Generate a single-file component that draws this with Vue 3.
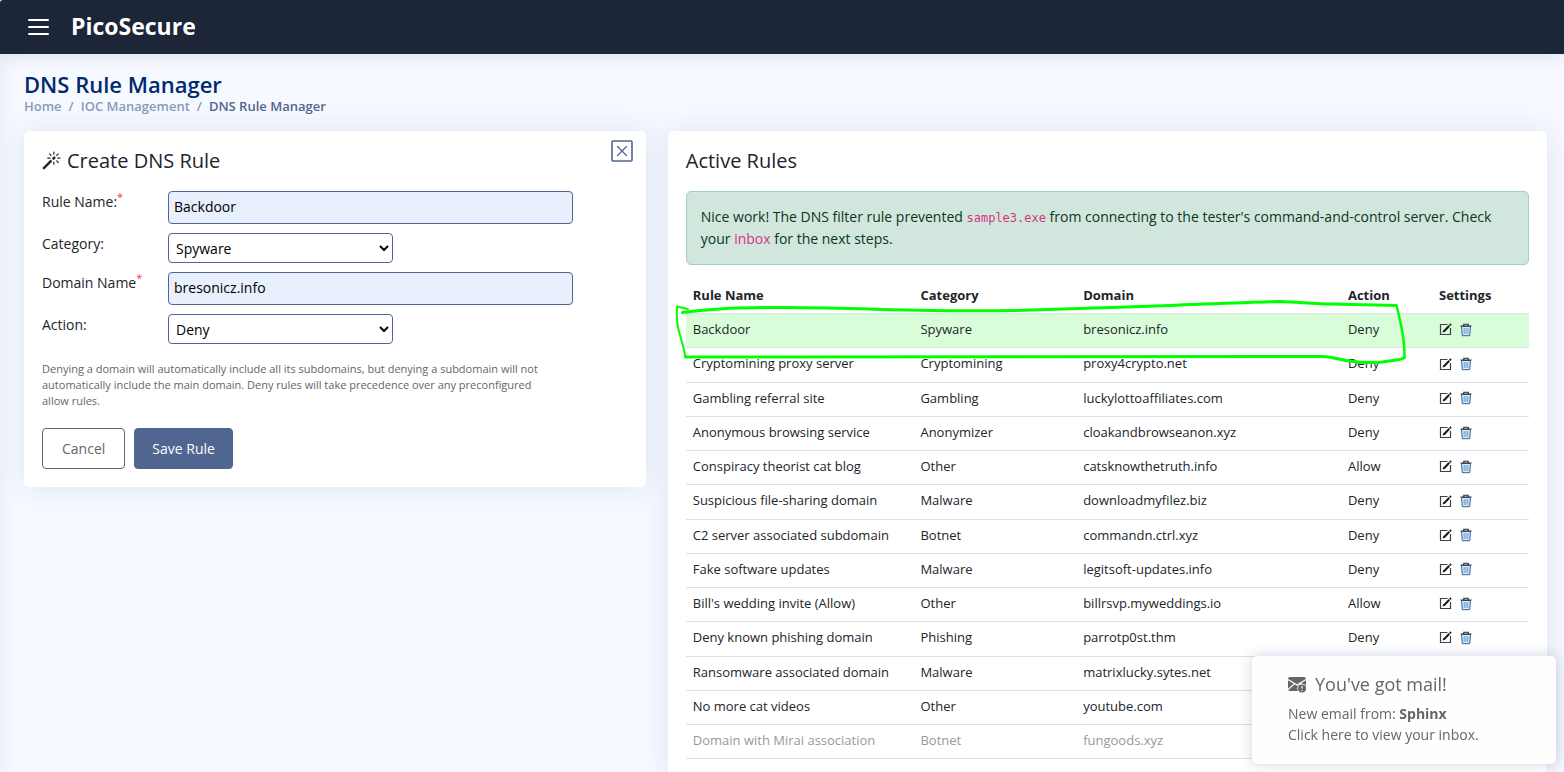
<script setup>
import { ref } from 'vue'

const ruleName = ref('Backdoor')
const category = ref('Spyware')
const domain = ref('bresonicz.info')
const action = ref('Deny')

const categories = ['Spyware', 'Malware', 'Botnet', 'Phishing', 'Cryptomining', 'Gambling', 'Anonymizer', 'Other']

const rules = [
  { name: 'Backdoor', category: 'Spyware', domain: 'bresonicz.info', action: 'Deny', state: 'added' },
  { name: 'Cryptomining proxy server', category: 'Cryptomining', domain: 'proxy4crypto.net', action: 'Deny' },
  { name: 'Gambling referral site', category: 'Gambling', domain: 'luckylottoaffiliates.com', action: 'Deny' },
  { name: 'Anonymous browsing service', category: 'Anonymizer', domain: 'cloakandbrowseanon.xyz', action: 'Deny' },
  { name: 'Conspiracy theorist cat blog', category: 'Other', domain: 'catsknowthetruth.info', action: 'Allow' },
  { name: 'Suspicious file-sharing domain', category: 'Malware', domain: 'downloadmyfilez.biz', action: 'Deny' },
  { name: 'C2 server associated subdomain', category: 'Botnet', domain: 'commandn.ctrl.xyz', action: 'Deny' },
  { name: 'Fake software updates', category: 'Malware', domain: 'legitsoft-updates.info', action: 'Deny' },
  { name: "Bill's wedding invite (Allow)", category: 'Other', domain: 'billrsvp.myweddings.io', action: 'Allow' },
  { name: 'Deny known phishing domain', category: 'Phishing', domain: 'parrotp0st.thm', action: 'Deny' },
  { name: 'Ransomware associated domain', category: 'Malware', domain: 'matrixlucky.sytes.net', action: 'Deny' },
  { name: 'No more cat videos', category: 'Other', domain: 'youtube.com', action: 'Deny' },
  { name: 'Domain with Mirai association', category: 'Botnet', domain: 'fungoods.xyz', action: 'Deny', state: 'muted' },
]
</script>

<template>
  <div class="app">
    <header class="topbar">
      <button class="menu" type="button" aria-label="Toggle menu">
        <svg viewBox="0 0 21 18" width="21" height="18" fill="none" stroke="#fff" stroke-width="2" stroke-linecap="round">
          <path d="M1 2h19M1 9h19M1 16h19" />
        </svg>
      </button>
      <a class="brand" href="#">PicoSecure</a>
    </header>

    <main class="main">
      <div class="page-title">
        <h1>DNS Rule Manager</h1>
        <nav class="crumbs" aria-label="Breadcrumb">
          <a href="#">Home</a><span>/</span><a href="#">IOC Management</a><span>/</span><strong>DNS Rule Manager</strong>
        </nav>
      </div>

      <div class="columns">
        <div class="col">
          <section class="card">
            <button class="close" type="button" aria-label="Close">
              <svg viewBox="0 0 22 22" width="22" height="22" fill="none" stroke="#50658f">
                <rect x="1" y="1" width="20" height="20" rx="1" stroke-width="1.6" />
                <path d="M6.5 6.5l9 9M15.5 6.5l-9 9" stroke-width="1.3" stroke-linecap="round" />
              </svg>
            </button>
            <h2>
              <svg class="wand" viewBox="0 0 16 16" width="19" height="19" fill="currentColor" aria-hidden="true">
                <path d="M9.5 2.672a.5.5 0 1 0 1 0V.843a.5.5 0 0 0-1 0v1.829Zm4.5.035A.5.5 0 0 0 13.293 2L12 3.293a.5.5 0 1 0 .707.707L14 2.707ZM7.293 4A.5.5 0 1 0 8 3.293L6.707 2A.5.5 0 0 0 6 2.707L7.293 4Zm-.621 2.5a.5.5 0 1 0 0-1H4.843a.5.5 0 1 0 0 1h1.829Zm8.485 0a.5.5 0 1 0 0-1h-1.829a.5.5 0 0 0 0 1h1.829ZM13.293 10A.5.5 0 1 0 14 9.293L12.707 8a.5.5 0 1 0-.707.707L13.293 10ZM9.5 11.157a.5.5 0 0 0 1 0V9.328a.5.5 0 0 0-1 0v1.829Zm1.854-5.097a.5.5 0 0 0 0-.706l-.708-.708a.5.5 0 0 0-.707 0L8.646 5.94a.5.5 0 0 0 0 .707l.708.708a.5.5 0 0 0 .707 0l1.293-1.293Zm-3 3a.5.5 0 0 0 0-.706l-.708-.708a.5.5 0 0 0-.707 0L.646 13.94a.5.5 0 0 0 0 .707l.707.707a.5.5 0 0 0 .707 0L8.354 9.06Z" />
              </svg>
              Create DNS Rule
            </h2>
            <form @submit.prevent>
              <div class="fields">
                <label for="rule-name">Rule Name:<sup>*</sup></label>
                <input id="rule-name" v-model="ruleName" type="text" />
                <label for="category">Category:</label>
                <select id="category" v-model="category">
                  <option v-for="c in categories" :key="c">{{ c }}</option>
                </select>
                <label for="domain">Domain Name<sup>*</sup></label>
                <input id="domain" v-model="domain" type="text" />
                <label for="action">Action:</label>
                <select id="action" v-model="action">
                  <option>Deny</option>
                  <option>Allow</option>
                </select>
              </div>
              <p class="help">
                Denying a domain will automatically include all its subdomains, but denying a subdomain will not
                automatically include the main domain. Deny rules will take precedence over any preconfigured allow
                rules.
              </p>
              <div class="actions">
                <button class="btn" type="button">Cancel</button>
                <button class="btn primary" type="submit">Save Rule</button>
              </div>
            </form>
          </section>
        </div>

        <div class="col">
          <section class="card">
            <h2>Active Rules</h2>
            <div class="alert" role="alert">
              Nice work! The DNS filter rule prevented <code>sample3.exe</code> from connecting to the tester's
              command-and-control server. Check your <a href="#">inbox</a> for the next steps.
            </div>
            <div class="table-wrap">
              <table>
                <thead>
                  <tr>
                    <th class="c-name">Rule Name</th>
                    <th class="c-cat">Category</th>
                    <th class="c-domain">Domain</th>
                    <th class="c-action">Action</th>
                    <th>Settings</th>
                  </tr>
                </thead>
                <tbody>
                  <tr v-for="rule in rules" :key="rule.name" :class="rule.state">
                    <td>{{ rule.name }}</td>
                    <td>{{ rule.category }}</td>
                    <td>{{ rule.domain }}</td>
                    <td>{{ rule.action }}</td>
                    <td>
                      <div class="tools">
                        <button type="button" aria-label="Edit rule">
                          <svg viewBox="0 0 13 13" width="13" height="13" fill="none">
                            <path d="M8.500 1.500H1.500v10h10V5" stroke="#3c4149" stroke-width="1.2" />
                            <path d="M3.600 9.600l.8-2.600 1.800 1.800z" fill="#16191d" />
                            <path d="M5 8.200L10.300 2.800" stroke="#16191d" stroke-width="2" />
                            <path d="M10.800 2.200l1.200-1.200" stroke="#16191d" stroke-width="2" />
                          </svg>
                        </button>
                        <button type="button" aria-label="Delete rule">
                          <svg viewBox="0 0 12 14" width="12" height="14" fill="none">
                            <path d="M1.500 3.500h9l-.8 9.200H2.300z" fill="#d6ecfd" stroke="#3d5f80" />
                            <path d="M.5 3h11M3.800 3V1.200h4.400V3" stroke="#26303a" stroke-width="1.1" />
                            <path d="M4.200 5v6M6 5v6M7.800 5v6" stroke="#3c8fd4" stroke-width=".8" />
                          </svg>
                        </button>
                      </div>
                    </td>
                  </tr>
                </tbody>
              </table>
              <svg class="marker" viewBox="0 0 740 70" width="740" height="70" fill="none" stroke="#00ff00" stroke-linecap="round" stroke-linejoin="round" aria-hidden="true">
                <path d="M14 10L3 7.500C2 20 3 27 6 36C9 46 10 50 11.500 58" stroke-width="2" />
                <path d="M8.500 13.500C40 9 75 8 113 8.500C190 9 260 13 340 11.500C400 10 445 8 496 6.500C535 5 575 3 606 2.500C625 3 640 5 660 5C685 6 705 6 722 6.500" stroke-width="3" />
                <path d="M722.500 6.500C727 24 731 42 730.500 58" stroke-width="2.500" />
                <path d="M730.500 58.500C728 61 723 61 715 62C705 64 690 64 675 62C667 61 660 58 648 57.500L11.500 58" stroke-width="3" />
              </svg>
            </div>
          </section>
        </div>
      </div>
    </main>

    <a class="toast" href="#">
      <span class="toast-title">
        <svg viewBox="0 0 20 17" width="20" height="17" aria-hidden="true">
          <rect x="0" y="1" width="18" height="14" rx="2" fill="#666" />
          <path d="M0 3.600L9 9l9-5.400M0 13.500l6.700-5.900M18 11l-6-4" fill="none" stroke="#fff" stroke-width="1.200" />
          <circle cx="14" cy="12.500" r="4.800" fill="#fff" />
          <circle cx="14" cy="12.500" r="4" fill="#666" />
          <path d="M14 10v2.800M14 14v1" stroke="#fff" stroke-width="1.200" />
        </svg>
        You've got mail!
      </span>
      <span>New email from: <strong>Sphinx</strong></span>
      <span>Click here to view your inbox.</span>
    </a>
  </div>
</template>

<style>
body {
  margin: 0;
  background: #f6f9ff;
  overflow: hidden;
}
</style>

<style scoped>
.app {
  font-family: "Open Sans", "Noto Sans", sans-serif;
  font-size: 14px;
  line-height: 22px;
  color: #212529;
}
.app *,
.app *::before {
  box-sizing: border-box;
}
a {
  text-decoration: none;
}
button,
input,
select {
  font: inherit;
}

.topbar {
  display: flex;
  align-items: center;
  gap: 22px;
  height: 54px;
  padding: 0 28px;
  background: #1d2538;
  border-top-left-radius: 3px;
  box-shadow: 0 2px 20px rgba(1, 41, 112, 0.1);
}
.menu {
  display: flex;
  padding: 0;
  border: 0;
  background: none;
}
.brand {
  padding-bottom: 2px;
  color: #fff;
  font-size: 23px;
  font-weight: 700;
}

.main {
  padding: 19px 6px 20px 13px;
  box-shadow: inset 10px 0 20px -10px rgba(1, 41, 112, 0.08);
}
.page-title {
  padding: 0 11px;
}
h1 {
  margin: 0 0 1px;
  font-size: 22px;
  line-height: 22px;
  font-weight: 600;
  color: #012970;
}
.crumbs {
  display: flex;
  gap: 7px;
  font-size: 13px;
  line-height: 20px;
  font-weight: 600;
  color: #899bbd;
}
.crumbs a {
  color: #899bbd;
}
.crumbs strong {
  font-weight: 600;
  color: #51678f;
}

.columns {
  display: grid;
  grid-template-columns: minmax(0, 5fr) minmax(0, 7fr);
  align-items: start;
  margin-top: 15px;
}
.col {
  padding: 0 11px;
}
.card {
  position: relative;
  padding: 18px;
  border-radius: 5px;
  background: #fff;
  box-shadow: 0 0 30px rgba(1, 41, 112, 0.1);
}
h2 {
  display: flex;
  align-items: center;
  gap: 6px;
  margin: 0 0 19px;
  font-size: 20px;
  line-height: 23px;
  font-weight: 400;
}
.close {
  position: absolute;
  top: 9px;
  right: 13px;
  display: flex;
  padding: 0;
  border: 0;
  background: none;
}

.fields {
  display: grid;
  grid-template-columns: 117px minmax(0, 405px);
  gap: 9px;
}
.fields input,
.fields select {
  border: 1px solid #50658f;
  border-radius: 4px;
  color: #000;
}
.fields input {
  width: 100%;
  height: 33px;
  padding: 0 5px 2px;
  background: #e8effd;
}
.fields select {
  width: 225px;
  height: 30px;
  padding: 0 3px;
  background: #fff;
}
sup {
  font-size: 11px;
  line-height: 0;
  color: #f33;
}
.help {
  max-width: 500px;
  margin: 17px 0 19px;
  font-size: 11px;
  line-height: 16px;
  color: #666;
}
.actions {
  display: flex;
  gap: 9px;
}
.btn {
  height: 41px;
  padding: 0 19px;
  border: 1px solid #666;
  border-radius: 4px;
  background: #fff;
  color: #666;
}
.btn.primary {
  padding: 0 17px;
  border-color: #50658f;
  background: #50658f;
  color: #fff;
}

.alert {
  padding: 14px;
  border: 1px solid #a3cfbb;
  border-radius: 5px;
  background: #d1e7dd;
  color: #0a3622;
}
.alert code {
  font-family: "DejaVu Sans Mono", "Liberation Mono", monospace;
  font-size: 12px;
  line-height: 1;
  color: #d63384;
}
.alert a {
  color: #d63384;
}

.table-wrap {
  position: relative;
  margin-top: 15px;
}
table {
  width: 100%;
  border-collapse: collapse;
  table-layout: fixed;
  font-size: 13px;
  line-height: 1.48;
}
th,
td {
  padding: 6px 7px 8px;
  border-bottom: 1px solid #dee2e6;
  text-align: left;
  white-space: nowrap;
}
th {
  font-weight: 700;
}
.c-name {
  width: 27%;
}
.c-cat {
  width: 19.3%;
}
.c-domain {
  width: 31.4%;
}
.c-action {
  width: 10.8%;
}
.added td {
  background: #d9fdd9;
}
.muted td {
  color: #999;
}
.tools {
  display: flex;
  align-items: center;
  gap: 8px;
}
.tools button {
  display: flex;
  padding: 0;
  border: 0;
  background: none;
}
.marker {
  position: absolute;
  top: 19px;
  left: -12px;
  pointer-events: none;
}

.toast {
  position: fixed;
  right: 8px;
  bottom: 8px;
  display: flex;
  flex-direction: column;
  width: 304px;
  padding: 18px 36px 19px;
  border-radius: 5px;
  background: #fefefe;
  color: #666;
  line-height: 21px;
  box-shadow: 0 0 14px rgba(1, 41, 112, 0.2);
}
.toast-title {
  display: flex;
  align-items: center;
  gap: 7px;
  margin-bottom: 8px;
  font-size: 18px;
}
</style>
